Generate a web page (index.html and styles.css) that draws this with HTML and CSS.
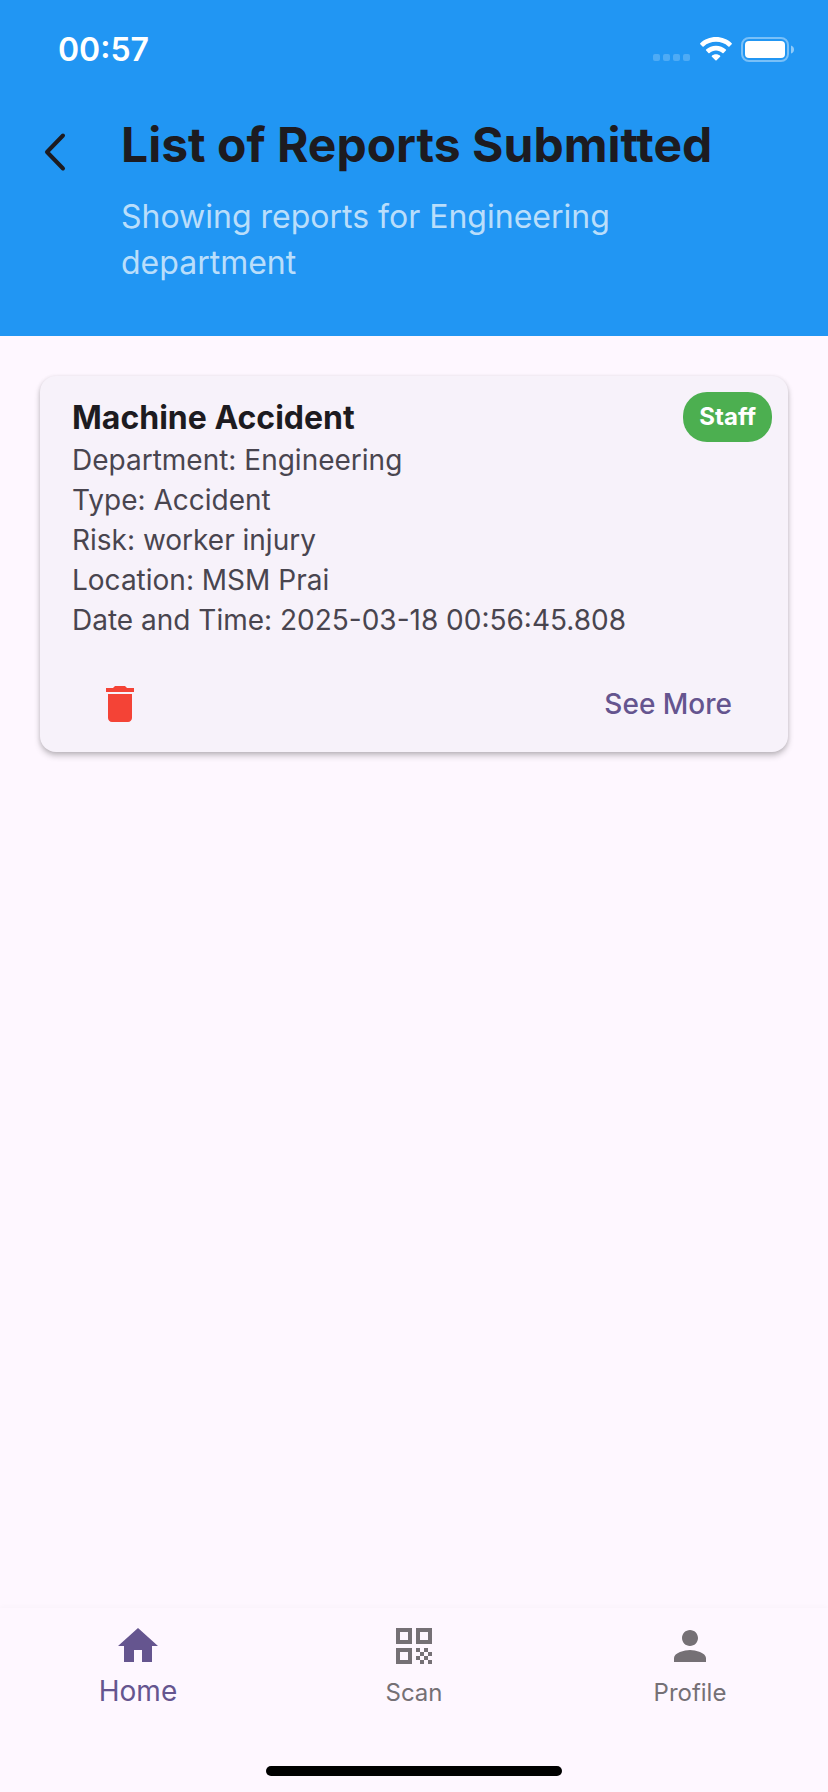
FILE: index.html
```html
<!DOCTYPE html>
<html lang="en">
<head>
<meta charset="utf-8">
<meta name="viewport" content="width=device-width, initial-scale=1">
<title>List of Reports Submitted</title>
<link rel="stylesheet" href="styles.css">
</head>
<body>
<div class="screen">
  <header class="header">
    <div class="status">
      <span class="time">00:57</span>
      <div class="status-icons">
        <svg class="signal" viewBox="0 0 37 7" aria-hidden="true"><rect width="7" height="7" rx="2"/><rect x="10" width="7" height="7" rx="2"/><rect x="20" width="7" height="7" rx="2"/><rect x="30" width="7" height="7" rx="2"/></svg>
        <svg class="wifi" viewBox="0 0 32 24" aria-hidden="true"><path d="M16 0C9.900 0 4.300 2.300 .3 6.200Q-.2 6.800.3 7.300L2.500 9.500Q3.100 10 3.700 9.500C7 6.300 11.300 4.800 16 4.800S25 6.300 28.300 9.500Q28.900 10 29.500 9.500L31.700 7.300Q32.200 6.800 31.700 6.200C27.700 2.300 22.100 0 16 0Z"/><path d="M16 8.700C12.200 8.700 8.700 10.100 6.100 12.500Q5.500 13.100 6.100 13.600L8.400 15.900Q9 16.400 9.600 15.900C11.300 14.400 13.600 13.500 16 13.500S20.700 14.400 22.400 15.900Q23 16.400 23.600 15.900L25.900 13.600Q26.500 13.100 25.900 12.500C23.300 10.100 19.800 8.700 16 8.700Z"/><path d="M16 17.300C14.400 17.300 13 17.900 11.900 18.700Q11.300 19.200 11.900 19.800L15.400 23.300Q16 23.900 16.600 23.300L20.100 19.800Q20.700 19.200 20.100 18.700C19 17.900 17.600 17.300 16 17.300Z"/></svg>
        <svg class="battery" viewBox="0 0 53 25" aria-hidden="true"><rect class="shell" x="1" y="1" width="46" height="23" rx="7"/><rect x="4" y="4" width="40" height="17" rx="4"/><path class="tip" d="M50 8.500Q53 9.500 53 12.500T50 16.500Z"/></svg>
      </div>
    </div>
    <div class="heading">
      <button class="back" type="button" aria-label="Back"><svg viewBox="0 0 24 40" aria-hidden="true"><path d="M20 3.500 4 20 20 36.500"/></svg></button>
      <div class="titles">
        <h1>List of Reports Submitted</h1>
        <p>Showing reports for Engineering department</p>
      </div>
    </div>
  </header>
  <main class="content">
    <article class="card">
      <span class="badge">Staff</span>
      <h2>Machine Accident</h2>
      <ul class="details">
        <li>Department: Engineering</li>
        <li>Type: Accident</li>
        <li>Risk: worker injury</li>
        <li>Location: MSM Prai</li>
        <li>Date and Time: 2025-03-18 00:56:45.808</li>
      </ul>
      <div class="actions">
        <button class="delete" type="button" aria-label="Delete"><svg class="icon" viewBox="0 0 24 24" aria-hidden="true"><path d="M6 19c0 1.100.9 2 2 2h8c1.100 0 2-.9 2-2V7H6v12zM19 4h-3.500l-1-1h-5l-1 1H5v2h14V4z"/></svg></button>
        <button class="more" type="button">See More</button>
      </div>
    </article>
  </main>
  <nav class="nav">
    <div class="tabs">
      <a class="tab active" href="#home" aria-current="page"><svg class="icon" viewBox="0 0 24 24" aria-hidden="true"><path d="M10 20v-6h4v6h5v-8h3L12 3 2 12h3v8z"/></svg><span>Home</span></a>
      <a class="tab" href="#scan"><svg class="icon" viewBox="0 0 24 24" aria-hidden="true"><path d="M3 11h8V3H3v8zm2-6h4v4H5V5zM3 21h8v-8H3v8zm2-6h4v4H5v-4zM13 3v8h8V3h-8zm6 6h-4V5h4v4zM19 19h2v2h-2zM13 13h2v2h-2zM15 15h2v2h-2zM13 17h2v2h-2zM15 19h2v2h-2zM17 17h2v2h-2zM17 13h2v2h-2zM19 15h2v2h-2z"/></svg><span>Scan</span></a>
      <a class="tab" href="#profile"><svg class="icon" viewBox="0 0 24 24" aria-hidden="true"><path d="M12 12c2.210 0 4-1.790 4-4s-1.790-4-4-4-4 1.790-4 4 1.790 4 4 4zm0 2c-2.670 0-8 1.340-8 4v2h16v-2c0-2.660-5.330-4-8-4z"/></svg><span>Profile</span></a>
    </div>
    <div class="home-indicator"></div>
  </nav>
</div>
</body>
</html>
```
FILE: styles.css
```css
* {
  box-sizing: border-box;
}

body {
  margin: 0;
  background: #fef7ff;
  color: #1d1b20;
  font-family: Inter, "Liberation Sans", sans-serif;
}

h1, h2, p, ul {
  margin: 0;
  padding: 0;
}

button {
  padding: 0;
  border: 0;
  background: none;
  font: inherit;
  cursor: pointer;
}

svg {
  display: block;
  fill: currentColor;
}

.screen {
  display: flex;
  flex-direction: column;
  min-height: 100vh;
}

.header {
  padding-bottom: 50px;
  background: #2196f3;
}

.status {
  display: flex;
  align-items: center;
  justify-content: space-between;
  height: 98px;
  padding: 0 34px 0 58px;
  color: #fff;
}

.time {
  font-size: 32px;
  font-weight: 600;
}

.status-icons {
  display: flex;
  align-items: center;
}

.signal {
  width: 37px;
  margin: 16px 10px 0 0;
  opacity: 0.2;
}

.wifi {
  width: 32px;
  margin-right: 9px;
}

.battery {
  width: 53px;
}

.shell {
  fill: none;
  stroke: currentColor;
  stroke-width: 2;
  opacity: 0.4;
}

.tip {
  opacity: 0.5;
}

.heading {
  display: flex;
  align-items: flex-start;
  gap: 54px;
  padding: 16px 72px 0 43px;
}

.back {
  flex: none;
  padding: 18px 0;
  color: #1d1b20;
}

.back svg {
  width: 24px;
  height: 40px;
  fill: none;
  stroke: currentColor;
  stroke-width: 4;
  stroke-linecap: round;
  stroke-linejoin: round;
}

.titles {
  flex: 1;
}

h1 {
  font-size: 48px;
  line-height: 62px;
  font-weight: 700;
  white-space: nowrap;
}

.titles p {
  margin-top: 18px;
  color: rgba(255, 255, 255, 0.7);
  font-size: 32px;
  line-height: 46px;
}

.content {
  flex: 1;
  padding: 40px;
}

.card {
  position: relative;
  padding: 20px 32px 8px;
  border-radius: 16px;
  background: #f7f2fa;
  box-shadow: 0 4px 6px rgba(0, 0, 0, 0.2), 0 1px 4px rgba(0, 0, 0, 0.12);
}

.badge {
  position: absolute;
  top: 16px;
  right: 16px;
  padding: 0 16px;
  border-radius: 24px;
  background: #4caf50;
  color: #fff;
  font-size: 24px;
  line-height: 50px;
  font-weight: 700;
}

h2 {
  font-size: 32px;
  line-height: 44px;
  font-weight: 700;
}

.details {
  list-style: none;
  color: #49454f;
  font-size: 28px;
  line-height: 40px;
}

.actions {
  display: flex;
  align-items: center;
  justify-content: space-between;
  margin-top: 24px;
  padding: 0 24px;
}

.icon {
  width: 48px;
  height: 48px;
}

.delete {
  padding: 16px 0;
  color: #f44336;
}

.more {
  color: #65558f;
  font-size: 28px;
  line-height: 40px;
  font-weight: 500;
}

.nav {
  box-shadow: 0 -2px 4px rgba(0, 0, 0, 0.02);
}

.tabs {
  display: flex;
  padding-top: 14px;
}

.tab {
  flex: 1;
  display: flex;
  flex-direction: column;
  align-items: center;
  gap: 4px;
  color: #757075;
  font-size: 24px;
  line-height: 38px;
  text-decoration: none;
}

.tab.active {
  color: #65558f;
  font-size: 28px;
  line-height: 34px;
}

.home-indicator {
  width: 296px;
  height: 10px;
  margin: 54px auto 16px;
  border-radius: 5px;
  background: #000;
}
```
